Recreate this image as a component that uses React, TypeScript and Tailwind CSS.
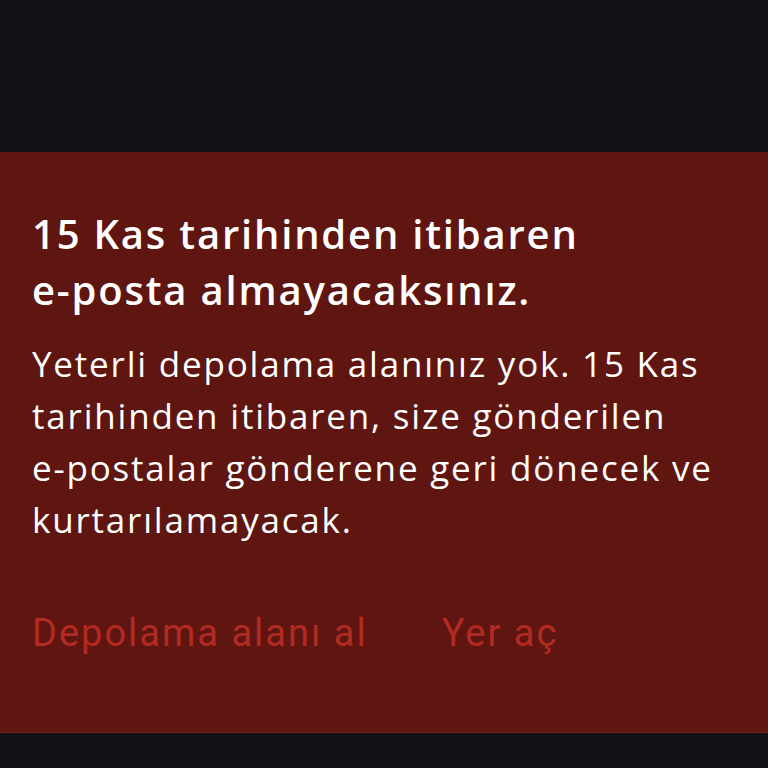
export default function App() {
    return (
        <div className="h-[768px] w-[768px] flex flex-col bg-[#121317] overflow-hidden" style={{ fontFamily: '"Open Sans", Roboto, sans-serif' }}>
            <div className="h-[152px] shrink-0 bg-[#121317]" />

            <div className="h-[581px] shrink-0 bg-[#5f1510] border-b border-[#6a1c16] px-8 pt-[54px]">
                <h1 className="text-[40px] leading-[56px] font-semibold text-white tracking-[1.8px]">
                    15 Kas tarihinden itibaren
                    <br />
                    e-posta almayacaksınız.
                </h1>

                <p className="mt-[20px] text-[35px] leading-[52px] text-white tracking-[1.8px]">
                    Yeterli depolama alanınız yok. 15 Kas
                    <br />
                    tarihinden itibaren, size gönderilen
                    <br />
                    e-postalar gönderene geri dönecek ve
                    <br />
                    kurtarılamayacak.
                </p>

                <div className="mt-[65px] flex items-center gap-[74px]" style={{ fontFamily: 'Roboto, sans-serif' }}>
                    <button className="text-[38px] leading-[44px] text-[#b32a23] tracking-[2px]">Depolama alanı al</button>
                    <button className="text-[38px] leading-[44px] text-[#b32a23] tracking-[2px]">Yer aç</button>
                </div>
            </div>

            <div className="flex-1 bg-[#121317]" />
        </div>
    );
}
